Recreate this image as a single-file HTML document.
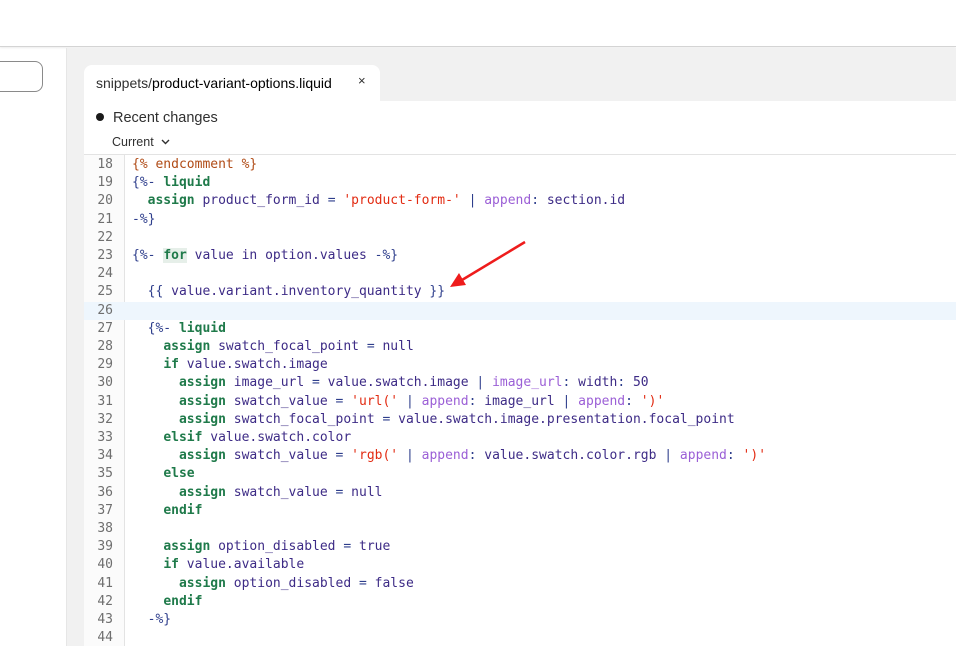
<!DOCTYPE html>
<html><head><meta charset="utf-8"><style>
*{margin:0;padding:0;box-sizing:border-box}
body{width:956px;height:646px;overflow:hidden;background:#fff;font-family:"Liberation Sans",sans-serif;position:relative}
.top{position:absolute;left:0;top:0;width:956px;height:47px;background:#fff;border-bottom:1px solid #d4d4d4;box-shadow:0 1px 2px rgba(0,0,0,.08)}
.gray{position:absolute;left:66px;top:48px;right:0;bottom:0;background:#f1f1f1;border-left:1px solid #e6e6e6}
.inp{position:absolute;left:-10px;top:61px;width:53px;height:31px;border:1px solid #8a8a8a;border-radius:8px;background:#fff}
.tab{position:absolute;left:84px;top:65px;width:296px;height:37px;background:#fff;border-radius:8px 8px 0 0;font-size:14px;color:#303030;padding:10px 0 0 12px}
.tab b{font-weight:normal;color:#000}
.x{position:absolute;left:274px;top:8px;font-size:13px;color:#303030}
.panel{position:absolute;left:84px;top:101px;right:0;bottom:0;background:#fff}
.rc{position:absolute;left:12px;top:9px;font-size:14.5px;color:#303030}
.rc i{display:inline-block;width:8px;height:8px;border-radius:50%;background:#1a1a1a;margin-right:9px;vertical-align:1px}
.cur{position:absolute;left:28px;top:34px;font-size:12.5px;color:#303030}
.code{position:absolute;left:0;top:53px;right:0;bottom:0;border-top:1px solid #e3e3e3}
.gut{position:absolute;left:0;top:0;width:41px;bottom:0;background:#fbfbfb;border-right:1px solid #e3e3e3}
.ln{position:absolute;left:0;right:0;height:18.2px;font-family:"DejaVu Sans Mono",monospace;font-size:13px;line-height:18.2px;white-space:pre;color:#303030}
.ln .n{position:absolute;left:0;width:29px;text-align:right;color:#6f6f6f}
.ln .c{position:absolute;left:48px;color:#3d2b86}
.k{color:#1f7a4a;font-weight:bold}.s{color:#e22b12}.f{color:#9b5fd6}.m{color:#b04b16}.p{color:#2e3e8c}
.hl{background:#eef6fd}
</style></head><body>
<div class="top"></div>
<div class="inp"></div>
<div class="gray"></div>
<div class="tab">snippets/<b>product-variant-options.liquid</b><span class="x">×</span></div>
<div class="panel">
<div class="rc"><i></i>Recent changes</div>
<div class="cur">Current &nbsp;<svg width="9" height="6" viewBox="0 0 9 6" style="vertical-align:1px"><path d="M1 1l3.5 3.5L8 1" stroke="#303030" stroke-width="1.4" fill="none"/></svg></div>
<div class="code">
<div class="gut"></div>
<div id="lines"></div>
</div>
</div>
<script>
var L=[
['18','<span class="m">{% endcomment %}</span>'],
['19','<span class="p">{%-</span> <span class="k">liquid</span>'],
['20','  <span class="k">assign</span> product_form_id <span class="p">=</span> <span class="s">\'product-form-\'</span> <span class="p">|</span> <span class="f">append</span><span class="p">:</span> section.id'],
['21','<span class="p">-%}</span>'],
['22',''],
['23','<span class="p">{%-</span> <span class="k" style="background:#e6efe9">for</span> value in option.values <span class="p">-%}</span>'],
['24',''],
['25','  <span class="p">{{</span> value.variant.inventory_quantity <span class="p">}}</span>'],
['26',''],
['27','  <span class="p">{%-</span> <span class="k">liquid</span>'],
['28','    <span class="k">assign</span> swatch_focal_point <span class="p">=</span> null'],
['29','    <span class="k">if</span> value.swatch.image'],
['30','      <span class="k">assign</span> image_url <span class="p">=</span> value.swatch.image <span class="p">|</span> <span class="f">image_url</span><span class="p">:</span> width<span class="p">:</span> 50'],
['31','      <span class="k">assign</span> swatch_value <span class="p">=</span> <span class="s">\'url(\'</span> <span class="p">|</span> <span class="f">append</span><span class="p">:</span> image_url <span class="p">|</span> <span class="f">append</span><span class="p">:</span> <span class="s">\')\'</span>'],
['32','      <span class="k">assign</span> swatch_focal_point <span class="p">=</span> value.swatch.image.presentation.focal_point'],
['33','    <span class="k">elsif</span> value.swatch.color'],
['34','      <span class="k">assign</span> swatch_value <span class="p">=</span> <span class="s">\'rgb(\'</span> <span class="p">|</span> <span class="f">append</span><span class="p">:</span> value.swatch.color.rgb <span class="p">|</span> <span class="f">append</span><span class="p">:</span> <span class="s">\')\'</span>'],
['35','    <span class="k">else</span>'],
['36','      <span class="k">assign</span> swatch_value <span class="p">=</span> null'],
['37','    <span class="k">endif</span>'],
['38',''],
['39','    <span class="k">assign</span> option_disabled <span class="p">=</span> true'],
['40','    <span class="k">if</span> value.available'],
['41','      <span class="k">assign</span> option_disabled <span class="p">=</span> false'],
['42','    <span class="k">endif</span>'],
['43','  <span class="p">-%}</span>'],
['44','']];
var h='';L.forEach(function(r,i){h+='<div class="ln'+(r[0]=='26'?' hl':'')+'" style="top:'+(1+i*18.2)+'px"><span class="n">'+r[0]+'</span><span class="c">'+r[1]+'</span></div>';});
document.getElementById('lines').innerHTML=h;
</script>
<svg style="position:absolute;left:0;top:0" width="956" height="646"><line x1="525" y1="242" x2="462" y2="280" stroke="#ee1c1c" stroke-width="2.5"/><polygon points="450,287 459,273 466,285" fill="#ee1c1c"/></svg>
</body></html>
